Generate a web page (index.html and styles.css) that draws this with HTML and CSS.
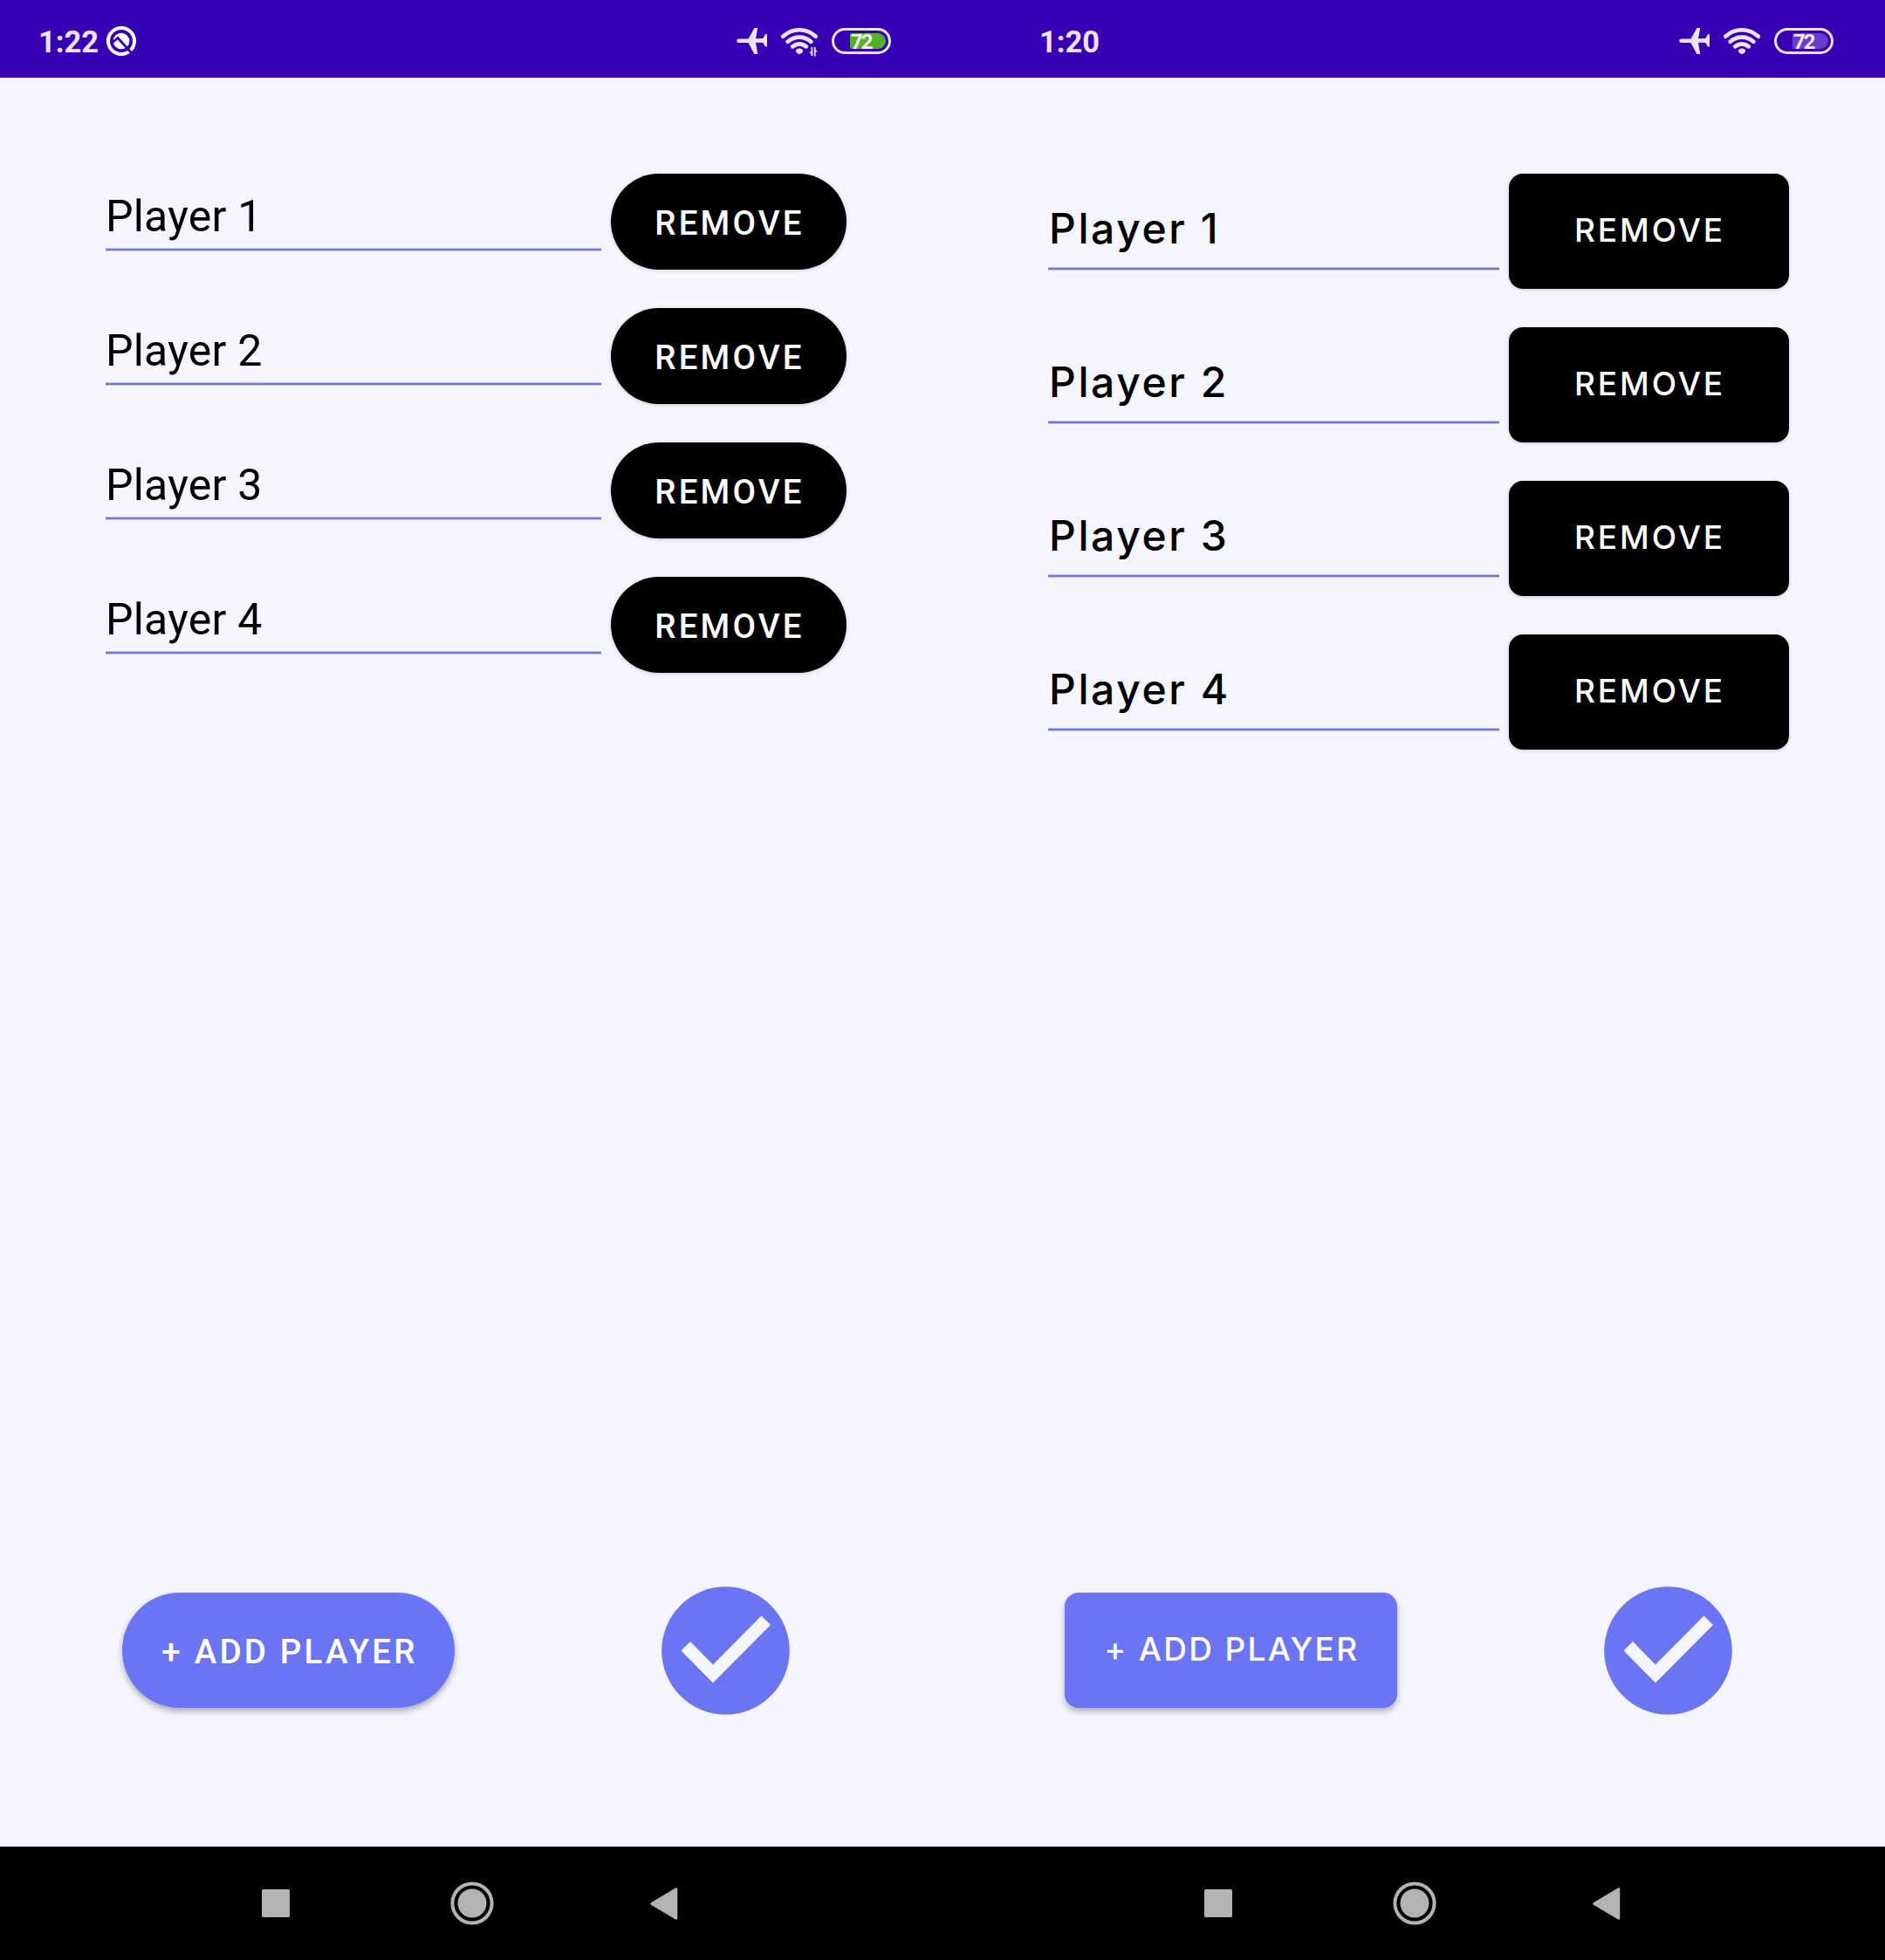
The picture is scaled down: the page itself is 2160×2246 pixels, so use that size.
FILE: index.html
```html
<!DOCTYPE html>
<html lang="en">
<head>
<meta charset="utf-8">
<title>Players</title>
<link rel="stylesheet" href="styles.css">
</head>
<body>
<svg class="defs" width="0" height="0" aria-hidden="true">
  <symbol id="plane" viewBox="0 0 35 30">
    <path d="M2.5 12.5H13.5L20.5 0H24.3L22 12.3L30.3 12L33 7.3H35V21.5H33L30.3 17L22 16.8L24.3 30H20.5L13.5 17H2.5A2.2 2.2 0 0 1 2.5 12.5Z"/>
  </symbol>
  <symbol id="wifi" viewBox="0 0 42 30">
    <path class="arc" d="M2.2 9.7Q10.500 2.300 21 2.300T39.800 9.700M7.700 15.800Q13.500 10.600 21 10.600T34.300 15.800M13.200 21.400Q17 18.400 21 18.400T28.800 21.400"/>
    <path d="M21 23.6C23.5 23.6 25.2 25 25.2 26.5C25.2 27.6 22.6 30 21 30S16.800 27.600 16.800 26.500C16.800 25 18.500 23.600 21 23.600Z"/>
  </symbol>
  <symbol id="check" viewBox="0 0 147 147">
    <circle class="disc" cx="73.500" cy="73.500" r="73.300"/>
    <path class="tick" d="M22.500 73.500L33 63L59 89.500L114.500 33.500L125 44L59 110.500Z"/>
  </symbol>
  <symbol id="square" viewBox="0 0 32 32"><rect width="32" height="32" rx="1.500"/></symbol>
  <symbol id="home" viewBox="0 0 50 50">
    <circle cx="25" cy="25" r="16.500"/><circle class="ring" cx="25" cy="25" r="22.600"/>
  </symbol>
  <symbol id="back" viewBox="0 0 32 37"><path d="M1 17.200L29 .6Q31.300-.3 31.300 2V35Q31.300 37.300 29 36.400L1 19.800Q-.6 18.500 1 17.200Z"/></symbol>
</svg>

<main class="screens">
  <section class="phone phone-round">
    <header class="status">
      <span class="time">1:22</span>
      <svg class="search" viewBox="0 0 34 34" width="34" height="34">
        <circle class="orbit" cx="17" cy="17" r="15"/>
        <circle cx="17" cy="17" r="9.300"/>
        <path class="handle" d="M7 18.500L13 13.500L29 31"/>
      </svg>
      <svg class="plane" width="35" height="30"><use href="#plane"/></svg>
      <span class="network">
        <svg width="42" height="30"><use href="#wifi"/></svg>
        <svg class="traffic" viewBox="0 0 10 11" width="10" height="11"><path d="M2.500 0H4.300V10H2.500V8L0 5.500H2.500ZM5.800 0H7.600V3L10 5.500H7.600V10.500H5.800Z"/></svg>
      </span>
      <span class="battery battery-charging"><span class="level">72</span></span>
    </header>
    <div class="content">
      <ul class="players">
        <li class="player"><span class="name">Player 1</span><button class="btn remove">REMOVE</button></li>
        <li class="player"><span class="name">Player 2</span><button class="btn remove">REMOVE</button></li>
        <li class="player"><span class="name">Player 3</span><button class="btn remove">REMOVE</button></li>
        <li class="player"><span class="name">Player 4</span><button class="btn remove">REMOVE</button></li>
      </ul>
      <div class="actions">
        <button class="btn add">+ ADD PLAYER</button>
        <svg width="147" height="147"><use href="#check"/></svg>
      </div>
    </div>
    <nav class="nav">
      <svg width="32" height="32"><use href="#square"/></svg>
      <svg width="50" height="50"><use href="#home"/></svg>
      <svg width="32" height="37"><use href="#back"/></svg>
    </nav>
  </section>

  <section class="phone phone-square">
    <header class="status">
      <span class="time">1:20</span>
      <svg class="plane" width="35" height="30"><use href="#plane"/></svg>
      <span class="network"><svg width="42" height="30"><use href="#wifi"/></svg></span>
      <span class="battery"><span class="level">72</span></span>
    </header>
    <div class="content">
      <ul class="players">
        <li class="player"><span class="name">Player 1</span><button class="btn remove">REMOVE</button></li>
        <li class="player"><span class="name">Player 2</span><button class="btn remove">REMOVE</button></li>
        <li class="player"><span class="name">Player 3</span><button class="btn remove">REMOVE</button></li>
        <li class="player"><span class="name">Player 4</span><button class="btn remove">REMOVE</button></li>
      </ul>
      <div class="actions">
        <button class="btn add">+ ADD PLAYER</button>
        <svg width="147" height="147"><use href="#check"/></svg>
      </div>
    </div>
    <nav class="nav">
      <svg width="32" height="32"><use href="#square"/></svg>
      <svg width="50" height="50"><use href="#home"/></svg>
      <svg width="32" height="37"><use href="#back"/></svg>
    </nav>
  </section>
</main>
</body>
</html>
```
FILE: styles.css
```css
* { box-sizing: border-box; }
body { margin: 0; font-family: Roboto, sans-serif; }
svg { display: block; flex: none; }
.defs { position: absolute; }

.screens { display: grid; grid-template-columns: 1080px 1080px; }
.phone {
  display: grid;
  grid-template-rows: 89px 2027px 130px;
  background: #f5f5ff;
}

/* Status bar */
.status {
  display: flex;
  align-items: center;
  padding: 5px 59px 0 44px;
  background: #3700b3;
  color: #eee2ff;
  fill: #eee2ff;
}
.time { font-size: 34.500px; font-weight: 700; line-height: 40px; padding-top: 1px; }
.search { margin-left: 9px; fill: #fff; }
.orbit { fill: none; stroke: #fff; stroke-width: 4; }
.handle { fill: none; stroke: #3700b3; stroke-width: 2.800; }
.plane { margin-left: auto; }
.network { position: relative; margin: 0 16px; }
.arc { fill: none; stroke: #eee2ff; stroke-width: 4.600; stroke-linecap: round; }
.traffic { position: absolute; right: 0; bottom: -3px; }
.battery {
  display: flex;
  justify-content: flex-end;
  width: 68px;
  height: 30px;
  padding: 3px;
  border: 3px solid #eee2ff;
  border-radius: 15px;
}
.level {
  width: 41px;
  padding-left: 1px;
  border-radius: 2px 9px 9px 2px;
  background: #6a3bcc;
  color: #f4eeff;
  font: 700 24px/20px Roboto, sans-serif;
  letter-spacing: -2px;
}
.battery-charging .level { background: #52b126; }

/* Player list */
.content { display: flex; flex-direction: column; justify-content: space-between; }
.players {
  display: flex;
  flex-direction: column;
  gap: 44px;
  margin: 0;
  padding: 110px 110px 0 121px;
  list-style: none;
}
.player { display: flex; gap: 11px; align-items: flex-start; }
.name {
  flex: 1;
  height: 89px;
  background: linear-gradient(#bcc3f5 1px, #737ad0 1px, #737ad0 3px, #bcc3f5 3px) bottom / 100% 4px no-repeat;
  color: #000;
  font-size: 50px;
  letter-spacing: .2px;
  line-height: 58px;
  padding-top: 20px;
}
.btn {
  flex: none;
  margin: 0;
  border: 0;
  color: #fff;
  white-space: nowrap;
  font: 500 38.500px/46px Roboto, sans-serif;
  letter-spacing: 3.200px;
}
.remove {
  width: 270px;
  height: 110px;
  padding: 3px 0 0 2px;
  border-radius: 55px;
  background: #000;
  box-shadow: 0 1px 4px rgba(0, 0, 0, .16);
}
.actions {
  display: flex;
  align-items: center;
  justify-content: space-between;
  padding: 0 175.500px 151.500px 140px;
}
.add {
  width: 381px;
  height: 132px;
  padding: 4px 0 0 3px;
  border-radius: 66px;
  background: #6b75f4;
  box-shadow: 0 4px 7px rgba(0, 0, 0, .3);
}
.disc { fill: #6b75f4; }
.tick { fill: #f5f5ff; }

/* Squared variant */
.phone-square .status { padding-left: 111px; }
.phone-square .name {
  height: 111px;
  padding-top: 34px;
  padding-left: 1px;
  font-family: Inter, sans-serif;
  font-size: 48px;
  font-weight: 500;
  letter-spacing: 2.600px;
}
.phone-square .btn {
  border-radius: 16px;
  font-family: Inter, sans-serif;
  font-size: 37px;
  font-weight: 500;
  letter-spacing: 2.900px;
}
.phone-square .remove { width: 321px; height: 132px; padding: 0 0 2px 2px; }
.phone-square .add { padding: 0 0 2px 2px; letter-spacing: 2.300px; }

/* Navigation bar */
.nav {
  display: flex;
  align-items: center;
  justify-content: space-between;
  padding: 0 303px 0 300px;
  background: #000;
  fill: #b3b3b3;
}
.nav svg:nth-child(2) { margin-left: 4px; }
.ring { fill: none; stroke: #b3b3b3; stroke-width: 4; }
```
